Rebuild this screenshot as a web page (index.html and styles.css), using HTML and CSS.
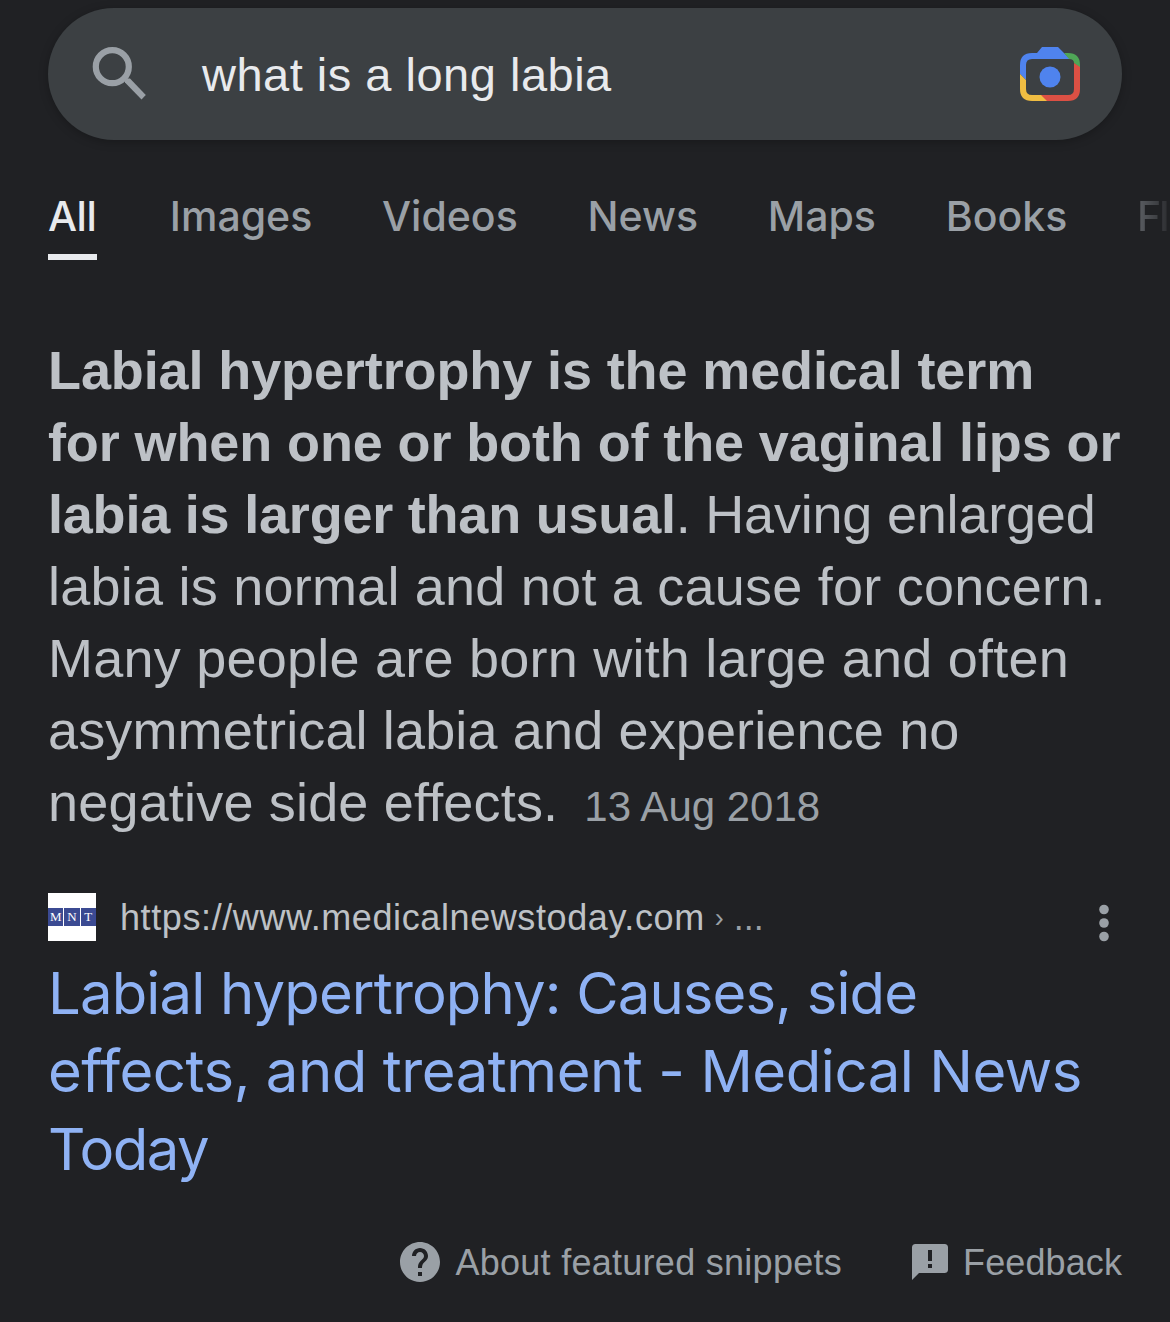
FILE: index.html
```
<!DOCTYPE html>
<html lang="en">
<head>
<meta charset="utf-8">
<title>what is a long labia - Search</title>
<link rel="stylesheet" href="styles.css">
</head>
<body>
<header class="search">
  <svg class="search-icon" width="54" height="54" viewBox="0 0 54 54"><circle cx="20.300" cy="19.700" r="16.500" fill="none" stroke="#9aa0a6" stroke-width="6.200"/><path d="M33 35.500V33.500L35.500 31.500H38L53.800 48L49.500 52.500z" fill="#9aa0a6"/></svg>
  <span class="query">what is a long labia</span>
  <svg class="lens" width="60" height="54" viewBox="0 0 60 54">
    <path d="M0 27V18Q0 6 12 6H17L22 0H38L44 6 50 12H12Q6 12 6 18V33z" fill="#4f83ee"/>
    <path d="M44 6H48Q60 6 60 18V21L54 16Q54 12 49 12z" fill="#4fa657"/>
    <path d="M60 20V42Q60 54 48 54H26L20 48H48Q54 48 54 42V16z" fill="#dc5044"/>
    <path d="M0 27L6 33V42Q6 48 12 48H21L27 54H12Q0 54 0 42z" fill="#f0bd42"/>
    <circle cx="30" cy="30" r="10.500" fill="#4f83ee"/>
  </svg>
</header>
<nav class="tabs">
  <a class="tab tab-all">All</a>
  <a class="tab">Images</a>
  <a class="tab">Videos</a>
  <a class="tab">News</a>
  <a class="tab">Maps</a>
  <a class="tab">Books</a>
  <a class="tab tab-more">Fl</a>
</nav>
<main class="snippet">
  <p class="answer">
    <b class="l1">Labial hypertrophy is the medical term</b><br>
    <b class="l2">for when one or both of the vaginal lips or</b><br>
    <span class="l3"><b>labia is larger than usual</b>. Having enlarged</span><br>
    <span class="l4">labia is normal and not a cause for concern.</span><br>
    <span class="l5">Many people are born with large and often</span><br>
    <span class="l6">asymmetrical labia and experience no</span><br>
    <span class="l7">negative side effects.</span><span class="date">13 Aug 2018</span>
  </p>
  <div class="source">
    <span class="favicon"><i>M</i><i>N</i><i>T</i></span>
    <span class="url">https://www.medicalnewstoday.com</span><span class="chevron">›</span><span class="crumb">...</span>
    <svg class="menu" width="10" height="38" viewBox="0 0 10 38" fill="#9aa0a6"><circle cx="5" cy="5.500" r="4.800"/><circle cx="5" cy="19" r="4.800"/><circle cx="5" cy="32.500" r="4.800"/></svg>
  </div>
  <h3 class="title"><span class="t1">Labial hypertrophy: Causes, side</span><br><span class="t2">effects, and treatment - Medical News</span><br><span class="t3">Today</span></h3>
</main>
<footer class="footer">
  <svg width="40" height="40" viewBox="2 2 20 20" fill="#9aa0a6"><path d="M12 2C6.480 2 2 6.480 2 12s4.480 10 10 10 10-4.480 10-10S17.520 2 12 2zm1 17h-2v-2h2v2zm2.070-7.750l-.9.920C13.450 12.900 13 13.500 13 15h-2v-.5c0-1.100.45-2.100 1.170-2.830l1.240-1.260c.37-.36.590-.86.590-1.410 0-1.100-.9-2-2-2s-2 .9-2 2H8c0-2.210 1.790-4 4-4s4 1.790 4 4c0 .88-.36 1.680-.93 2.250z"/></svg>
  <span class="about">About featured snippets</span>
  <svg class="feedback-icon" width="36" height="36" viewBox="0 0 36 36"><path d="M3.500 0H32.500Q36 0 36 3.500V25.500Q36 29 32.500 29H7L0 36V3.500Q0 0 3.500 0zM16 6V17H20V6zM16 20V24H20V20z" fill="#9aa0a6" fill-rule="evenodd"/></svg>
  <span class="feedback">Feedback</span>
</footer>
</body>
</html>
```
FILE: styles.css
```
* { box-sizing: border-box; }
body {
  margin: 0;
  width: 1170px;
  height: 1322px;
  padding-top: 8px;
  overflow: hidden;
  background: #202124;
  color: #bdc1c6;
  font-family: "Liberation Sans", Arial, sans-serif;
}
svg { display: block; flex: none; }
.search {
  display: flex;
  align-items: center;
  height: 132px;
  margin: 0 48px;
  padding: 0 42px 0 44px;
  border-radius: 66px;
  background: #3c4043;
  box-shadow: 0 2px 10px rgba(0, 0, 0, .25);
}
.query { margin-left: 56px; font-size: 47px; letter-spacing: .5px; color: #e8eaed; white-space: nowrap; }
.lens { margin-left: auto; }
.tabs {
  display: flex;
  gap: 69.8px;
  height: 148px;
  padding: 44px 0 0 48px;
  overflow: hidden;
  color: #9aa0a6;
  font: 500 41px/64px Inter, sans-serif;
}
.tab { flex: none; height: 76px; white-space: nowrap; }
.tab-all { width: 49px; margin-right: 3px; letter-spacing: -.5px; color: #e8eaed; border-bottom: 6px solid #e8eaed; }
.tab-more { letter-spacing: -2px; background: linear-gradient(90deg, #5c5f64, #292a2d 34px); background-clip: text; color: transparent; }
.snippet { padding: 46px 48px 0; }
.answer { margin: 0; font-size: 54px; line-height: 72px; white-space: nowrap; }
.l1, .l2 { letter-spacing: -.11px; }
.l3 { letter-spacing: -.21px; }
.l4, .l5 { letter-spacing: .23px; }
.l6 { letter-spacing: .14px; }
.l7 { letter-spacing: .18px; }
.date { margin-left: 26px; font-size: 42px; color: #9aa0a6; }
.source { display: flex; align-items: center; height: 48px; margin-top: 50px; }
.favicon { display: flex; align-items: center; gap: 1px; width: 48px; height: 48px; background: #fff; }
.favicon i { flex: 1; height: 18px; background: #3b4a92; color: #fff; font: 13px/18px "Liberation Serif", serif; text-align: center; }
.url { margin-left: 24px; padding-top: 1px; font-size: 36px; letter-spacing: .6px; }
.chevron { margin-left: 10px; padding-top: 2px; font-size: 27px; color: #9aa0a6; }
.crumb { margin-left: 10px; padding-top: 1px; font-size: 36px; color: #9aa0a6; }
.menu { margin: 12px 13px 0 auto; }
.title { margin: 13px 0 0; color: #8fb2f4; font: 400 58px/78px Inter, sans-serif; white-space: nowrap; }
.t1 { letter-spacing: -.85px; }
.t2 { letter-spacing: -.44px; }
.t3 { letter-spacing: -1.5px; }
.footer { display: flex; align-items: center; justify-content: flex-end; height: 40px; margin-top: 54px; padding-right: 48px; font-size: 36px; color: #9aa0a6; white-space: nowrap; }
.about { margin-left: 15px; padding-top: 1px; letter-spacing: .28px; }
.feedback-icon { margin-left: 70px; }
.feedback { margin-left: 15px; padding-top: 1px; letter-spacing: .1px; }
```
